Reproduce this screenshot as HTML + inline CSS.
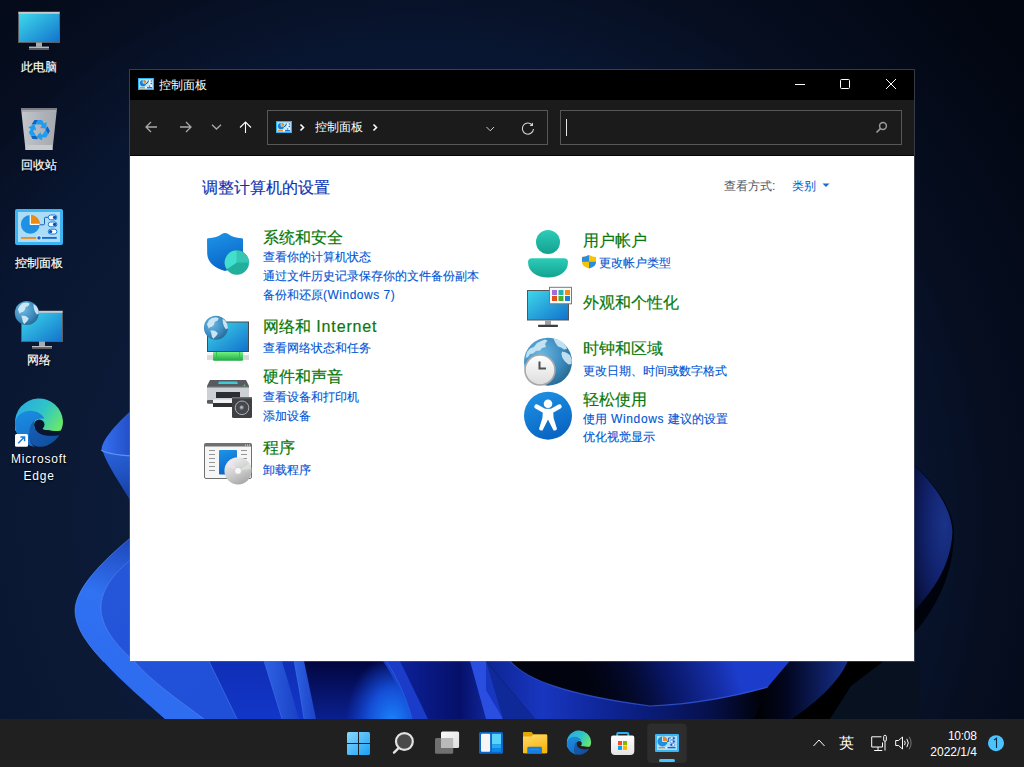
<!DOCTYPE html>
<html><head><meta charset="utf-8">
<style>
*{box-sizing:border-box;margin:0;padding:0}
html,body{width:1024px;height:767px;overflow:hidden;background:#08132a;font-family:"Liberation Sans",sans-serif}
.a{position:absolute}
svg.a{overflow:visible}
.dt{position:absolute;color:#fff;-webkit-text-stroke:0.2px #fff;font-size:12px;line-height:17px;text-align:center;white-space:nowrap;text-shadow:0 1px 2px rgba(0,0,0,.9),0 0 1px rgba(0,0,0,.8)}
.t{position:absolute;font-size:12px;line-height:16px;white-space:nowrap}
.h{position:absolute;font-size:16px;line-height:20px;white-space:nowrap}
.g{color:#087808;-webkit-text-stroke:0.18px #087808}
.l{color:#0055d4;-webkit-text-stroke:0.12px #0055d4}
</style></head><body>
<!--WALL-->
<svg class="a" style="left:0;top:0" width="1024" height="767" viewBox="0 0 1024 767">
  <defs>
    <radialGradient id="bgl" cx="420" cy="520" r="760" gradientUnits="userSpaceOnUse">
      <stop offset="0" stop-color="#0e1f40"/><stop offset="0.5" stop-color="#0b1935"/><stop offset="0.62" stop-color="#091631"/><stop offset="0.76" stop-color="#060e20"/><stop offset="1" stop-color="#020611"/>
    </radialGradient>
    <linearGradient id="pet1" x1="0" y1="0" x2="1" y2="0">
      <stop offset="0" stop-color="#3470f2"/><stop offset="1" stop-color="#1f44b8"/>
    </linearGradient>
    <linearGradient id="pet1b" x1="0" y1="0" x2="0.2" y2="1">
      <stop offset="0" stop-color="#2c66e0"/><stop offset="0.6" stop-color="#1d4cb8"/><stop offset="1" stop-color="#12358c"/>
    </linearGradient>
    <linearGradient id="pet2" x1="132" y1="532" x2="92" y2="650" gradientUnits="userSpaceOnUse">
      <stop offset="0" stop-color="#1c42b4"/><stop offset="0.55" stop-color="#3072f2"/><stop offset="1" stop-color="#2e6cf0"/>
    </linearGradient>
    <linearGradient id="pet2in" x1="100" y1="560" x2="200" y2="700" gradientUnits="userSpaceOnUse">
      <stop offset="0" stop-color="#2656d8"/><stop offset="1" stop-color="#2050d8"/>
    </linearGradient>
    <linearGradient id="btm" x1="0" y1="0" x2="0" y2="1">
      <stop offset="0" stop-color="#0a1c8c"/><stop offset="1" stop-color="#1236c8"/>
    </linearGradient>
    <radialGradient id="glow1" cx="392" cy="724" r="62" gradientUnits="userSpaceOnUse" gradientTransform="translate(392 724) scale(0.75 1.1) translate(-392 -724)">
      <stop offset="0" stop-color="#1c86ff"/><stop offset="0.5" stop-color="#1450d8"/><stop offset="1" stop-color="#1440d0" stop-opacity="0"/>
    </radialGradient>
    <linearGradient id="stk" x1="0" y1="0" x2="1" y2="0">
      <stop offset="0" stop-color="#2e62e4"/><stop offset="1" stop-color="#1a40c4"/>
    </linearGradient>
    <linearGradient id="dark3" x1="0" y1="0" x2="1" y2="0">
      <stop offset="0" stop-color="#0c2098"/><stop offset="0.6" stop-color="#06106a"/><stop offset="1" stop-color="#1430b0"/>
    </linearGradient>
    <linearGradient id="dark2" x1="0" y1="0" x2="0" y2="1">
      <stop offset="0" stop-color="#02053e"/><stop offset="1" stop-color="#0a2090"/>
    </linearGradient>
    <linearGradient id="swoosh" x1="0" y1="0" x2="0" y2="1">
      <stop offset="0" stop-color="#02062a"/><stop offset="0.5" stop-color="#0c1e90"/><stop offset="1" stop-color="#2250e0"/>
    </linearGradient>
    <linearGradient id="r1" x1="0" y1="0" x2="0" y2="1">
      <stop offset="0" stop-color="#0a1a78"/><stop offset="0.6" stop-color="#1a3ccc"/><stop offset="1" stop-color="#0c1e88"/>
    </linearGradient>
    <linearGradient id="below" x1="486" y1="0" x2="768" y2="0" gradientUnits="userSpaceOnUse">
      <stop offset="0" stop-color="#0e2490"/><stop offset="0.2" stop-color="#1836c0"/><stop offset="0.5" stop-color="#0c2088"/><stop offset="0.8" stop-color="#06104a"/><stop offset="1" stop-color="#000"/>
    </linearGradient>
    <linearGradient id="swR" x1="580" y1="700" x2="730" y2="650" gradientUnits="userSpaceOnUse">
      <stop offset="0" stop-color="#01030e" stop-opacity="0"/><stop offset="0.55" stop-color="#0a1a78" stop-opacity="0.8"/><stop offset="1" stop-color="#1c3ccc"/>
    </linearGradient>
    <linearGradient id="rightb" x1="0" y1="0" x2="1" y2="0">
      <stop offset="0" stop-color="#000"/><stop offset="0.35" stop-color="#020620"/><stop offset="1" stop-color="#16308e"/>
    </linearGradient>
    <radialGradient id="sph" cx="0.85" cy="0.42" r="0.8">
      <stop offset="0" stop-color="#1a3388"/><stop offset="0.4" stop-color="#122470"/><stop offset="0.75" stop-color="#0a1548"/><stop offset="1" stop-color="#03061a"/>
    </radialGradient>
  </defs>
  <rect width="1024" height="767" fill="url(#bgl)"/>
  <!-- right sphere petal -->
  <path d="M900 452 C928 476 952 502 954 532 C954 578 932 618 900 648 Z" fill="#01030c"/>
  <path d="M900 452 C927 476 951 502 952.5 532 C951 566 932 596 900 624 Z" fill="url(#sph)"/>
  <!-- left upper petal -->
  <path d="M140 403 C126 414 107 433 102.5 445 C100.5 450 102 453 108 455 L140 457 Z" fill="url(#pet1)"/>
  <path d="M102 448 C105 462 118 480 140 516 L140 455 C120 455 106 455 102 448 Z" fill="url(#pet1b)"/>
  <path d="M101 450 Q112 456 140 456" stroke="#6aa0f4" stroke-width="1.2" fill="none" opacity="0.8"/>
  <!-- bottom bloom base -->
  <path d="M140 530 L140 661 L884 661 L830 719 L165 719 C146 702 122 682 104 662 C88 645 75 628 75 610 C76 585 108 556 140 530 Z" fill="url(#btm)"/>
  <!-- lower petal bright band -->
  <path d="M140 553 C118 568 103 585 101 605 C100 622 110 640 134 661 C150 680 178 700 204 719 L237 719 L209 661 L140 661 Z" fill="url(#pet2in)"/>
  <path d="M140 530 C108 556 76 585 75 610 C75 628 88 645 104 662 C122 682 146 702 165 719 L204 719 C178 700 150 680 134 661 C110 640 100 622 101 605 C103 585 118 568 140 553 Z" fill="url(#pet2)"/>
  <path d="M140 553 C118 568 103 585 101 605 C100 622 110 640 134 661 C150 680 178 700 204 719" stroke="#6a9cf6" stroke-width="0.9" fill="none" opacity="0.55"/>
  <path d="M140 530 C108 556 76 585 75 610 C75 628 88 645 104 662" stroke="#5a9af8" stroke-width="1" fill="none" opacity="0.5"/>
  <path d="M209 661 L237 719" stroke="#4a7ae8" stroke-width="1" fill="none" opacity="0.6"/>
  <!-- streaks -->
  <path d="M264 661 L282 661 L299 719 L282 719 Z" fill="url(#stk)"/>
  <path d="M264 661 L282 719" stroke="#4a7af0" stroke-width="0.8" fill="none" opacity="0.6"/>
  <path d="M294 661 L306 661 L318 719 L304 719 Z" fill="url(#stk)"/>
  <path d="M294 661 Q300 690 304 719" stroke="#4a7af0" stroke-width="0.8" fill="none" opacity="0.5"/>
  <!-- dark area -->
  <path d="M304 661 L400 661 L430 719 L316 719 Z" fill="url(#dark2)"/>
  <path d="M383 661 L400 661 C412 680 420 700 428 719 L409 719 C404 700 396 680 383 661 Z" fill="#1a3cc8"/>
  <path d="M330 661 L386 661 C399 680 407 700 412 719 L330 719 Z" fill="url(#glow1)"/>
  <path d="M386 661 C399 680 407 700 412 719" stroke="#3a70f0" stroke-width="0.8" fill="none" opacity="0.6"/>
  <path d="M400 661 L472 661 L500 719 L428 719 Z" fill="url(#dark3)"/>
  <path d="M470 661 L486 661 L503 719 L486 719 Z" fill="#2a4ee0"/>
  <!-- right dark swirl region -->
  <path d="M486 661 L884 661 L830 719 L503 719 Z" fill="#02061c"/>
  <path d="M486 661 L535 719 L503 719 L486 690 Z" fill="#1432b8" opacity="0.8"/>
  <path d="M486 661 L510 661 C525 678 560 694 650 706 C692 704.6 737 696 768 687 L754 719 L535 719 Z" fill="url(#below)"/>
  <path d="M510 661 C525 678 560 694 650 706 C692 704.6 737 696 768 687 L790 661 Z" fill="#01030e"/>
  <path d="M510 661 C525 678 560 694 650 706 C692 704.6 737 696 768 687 L790 661 Z" fill="url(#swR)"/>
    <path d="M510 661 C525 678 560 694 650 706 C692 704.6 737 696 768 687" stroke="#3a64f4" stroke-width="1.1" fill="none" opacity="0.7"/>
  <path d="M768 687 L790 661 L848 661 C840 680 820 700 792 719 L754 719 Z" fill="url(#rightb)"/>
  <path d="M848 661 L884 661 L851 686 L830 719 L792 719 C820 700 840 680 848 661 Z" fill="#000"/>
  <path d="M884 661 L920 661 L920 719 L830 719 L851 686 Z" fill="#07111f"/>
</svg>

<!--/WALL-->

<!--DESKTOP-->
<svg class="a" style="left:0;top:0" width="130" height="719" viewBox="0 0 130 719">
<defs>
  <linearGradient id="dscr" x1="0" y1="0" x2="1" y2="1">
    <stop offset="0" stop-color="#3fdcec"/><stop offset="1" stop-color="#1272cc"/>
  </linearGradient>
  <linearGradient id="binG" x1="0" y1="0" x2="1" y2="0">
    <stop offset="0" stop-color="#c4c8cc"/><stop offset="0.5" stop-color="#b2b6bc"/><stop offset="1" stop-color="#a4a8ae"/>
  </linearGradient>
  <radialGradient id="dglobe" cx="0.35" cy="0.35" r="0.75">
    <stop offset="0" stop-color="#6fbbe4"/><stop offset="0.6" stop-color="#3f8dc0"/><stop offset="1" stop-color="#25638c"/>
  </radialGradient>
  <linearGradient id="edgeTop" x1="0" y1="0" x2="1" y2="0.6">
    <stop offset="0" stop-color="#2aa6e6"/><stop offset="0.55" stop-color="#2ec4c8"/><stop offset="1" stop-color="#6ae86a"/>
  </linearGradient>
  <linearGradient id="edgeL" x1="0" y1="0" x2="0.3" y2="1">
    <stop offset="0" stop-color="#1a8ee2"/><stop offset="1" stop-color="#1670cc"/>
  </linearGradient>
  <linearGradient id="edgeB" x1="0" y1="0" x2="1" y2="1">
    <stop offset="0" stop-color="#1760b8"/><stop offset="1" stop-color="#0f4c9a"/>
  </linearGradient>
</defs>
<!-- This PC -->
<rect x="18.5" y="12" width="41" height="30.5" fill="url(#dscr)" stroke="#5c5f64" stroke-width="1"/>
<rect x="18.5" y="12" width="41" height="1.8" fill="#c8cacc"/>
<rect x="36" y="42.5" width="6" height="4.5" fill="#a8acb0"/>
<rect x="29" y="46.7" width="20" height="3.3" fill="#5a5d62"/>
<rect x="29" y="46.7" width="20" height="1.2" fill="#c0c3c6"/>
<!-- Recycle bin -->
<path d="M21 108 H57 L52.5 150 H25.5 Z" fill="url(#binG)"/>
<path d="M21 108 H57 L56.5 112 H21.5 Z" fill="#7a7e84"/>
<path d="M22 111 H56" stroke="#d8dadc" stroke-width="1"/>
<path d="M25.9 145 H52.1 L52.5 150 H25.5 Z" fill="#c8cbce"/>
<g transform="translate(39,130)"><g><path d="M-7.5 -5.5 L-4.5 -10 L-1 -10 L-3.5 -5.5 Z" fill="#0a64c4"/><path d="M-1 -10 L3 -10 L5 -6.5 L7.5 -8 L7.5 -1 L1 -2.5 L3 -4 L1.8 -5.5 L-3.5 -5.5 Z" fill="#1f9cf0"/></g><g transform="rotate(120)"><g><path d="M-7.5 -5.5 L-4.5 -10 L-1 -10 L-3.5 -5.5 Z" fill="#0a64c4"/><path d="M-1 -10 L3 -10 L5 -6.5 L7.5 -8 L7.5 -1 L1 -2.5 L3 -4 L1.8 -5.5 L-3.5 -5.5 Z" fill="#1f9cf0"/></g></g><g transform="rotate(240)"><g><path d="M-7.5 -5.5 L-4.5 -10 L-1 -10 L-3.5 -5.5 Z" fill="#0a64c4"/><path d="M-1 -10 L3 -10 L5 -6.5 L7.5 -8 L7.5 -1 L1 -2.5 L3 -4 L1.8 -5.5 L-3.5 -5.5 Z" fill="#1f9cf0"/></g></g></g>
<!-- Control panel -->
<rect x="15" y="209" width="48" height="36" rx="2" fill="#3db4f2"/>
<rect x="18" y="212" width="42" height="30" fill="#acdcf6"/>
<circle cx="30.3" cy="224.4" r="9.4" fill="#1f90e2"/>
<path d="M30.3 224.4 V215 A9.4 9.4 0 0 1 39.7 224.4 Z" fill="#f08a0e"/>
<path d="M30.3 224.4 V215 M30.3 224.4 H39.7" stroke="#fff" stroke-width="1.2"/>
<path d="M39.7 224.8 H43.5 Q44.5 224.8 44.5 223.8 V218.3 Q44.5 217.3 45.5 217.3 H49" stroke="#0d4ea8" stroke-width="0.9" fill="none"/>
<rect x="48.3" y="215" width="8.6" height="4.8" rx="2.4" fill="#fff" stroke="#1a78d8" stroke-width="1"/>
<circle cx="54.6" cy="217.4" r="1.7" fill="#0d4ea8"/>
<rect x="48.3" y="222" width="8.6" height="4.8" rx="2.4" fill="#fff" stroke="#1a78d8" stroke-width="1"/>
<circle cx="54.6" cy="224.4" r="1.7" fill="#0d4ea8"/>
<rect x="48.3" y="229.2" width="8.6" height="4.8" rx="2.4" fill="#fff" stroke="#1a78d8" stroke-width="1"/>
<circle cx="50.6" cy="231.6" r="1.7" fill="#0d4ea8"/>
<rect x="21" y="237" width="15.6" height="1.8" fill="#f08a0e"/>
<rect x="42" y="237" width="14.7" height="1.8" fill="#0f6ad0"/>
<circle cx="39" cy="237.9" r="2.2" fill="#0f6ad0" stroke="#fff" stroke-width="0.8"/>
<!-- Network -->
<rect x="21.5" y="311" width="41" height="30.5" fill="url(#dscr)" stroke="#5c5f64" stroke-width="1"/>
<rect x="21.5" y="311" width="41" height="1.8" fill="#c8cacc"/>
<rect x="39" y="341.5" width="6" height="4.5" fill="#a8acb0"/>
<rect x="32" y="346" width="20" height="3" fill="#5a5d62"/>
<rect x="32" y="346" width="20" height="1.1" fill="#c0c3c6"/>
<g transform="translate(26.8,312.9)"><circle r="12" fill="url(#dglobe)"/>
<path d="M-9 -3.5 L-7 -7.5 L-4 -9.8 L0 -10.5 L3 -9.5 L1.5 -7 L-1 -6 L-2 -3 L-4 -1 L-6 -0.5 L-7 1 Z M-5.5 2.5 L-1 3 L2 5.5 L0.5 8 L-2.5 11 L-4 9 L-4.5 6 Z M6.5 -9 L9.5 -7 L11.5 -3.5 L12 0.5 L10 1.5 L8 -1.5 L7 -5 Z" fill="#d6ecf7" opacity="0.92"/></g>
<!-- Edge -->
<g id="edgeIcon">
<path d="M15 424 A24 24 0 0 1 63 421 C63 425 62.2 428 60.8 430.5 C57 431.5 51 431 46 430.2 C42 429.4 40 427.5 39 425 L22 440 L15 430 Z" fill="url(#edgeTop)"/>
<path d="M15 424 C15.5 416 22.5 410.5 30.5 410.8 C37 411 42 414 44.5 418.8 C41 418 37 418.5 35 420.5 C31 424 29.5 430 29.5 436 C29.5 440 31 445 35 447 C24 445 15 436 15 424 Z" fill="url(#edgeL)"/>
<path d="M35 420 C31 423 29.2 428 29.2 433 C29.2 439 30.5 443 33 445 C36 446.6 39 447 42 446.8 C49 446 55.5 441 59.3 435 C55 435.8 51 436 46.6 435.6 C41.5 435 38 433 36.2 430.5 C33.8 427.5 33.5 423 35 420 Z" fill="url(#edgeB)"/>
<circle cx="39.3" cy="424.6" r="5.2" fill="#0a1530"/>
<path d="M34.5 426 C35.5 431 40 434.3 46.5 435.2 C51 435.8 55.5 435.6 59.3 435 C55.5 431.5 50.5 430 45.5 430 C42 430 39.5 429 38.5 427 Z" fill="#0a1530"/>
<path d="M43.5 420.5 C45.5 422.5 45.5 425.5 44 427.5 C45.5 429.3 49 430 52 430 C55 430 58 429 60 427.5 C61.5 424 62.8 420 63 418 C63 424 62 428 60 430.5 C56 430.6 50 430.5 45.5 430 C43 429.6 41.5 428 41.5 426 Z" fill="url(#edgeTop)" opacity="0"/>
</g>
<rect x="15" y="434" width="13" height="12.7" rx="1.5" fill="#fff"/>
<path d="M18.2 443.2 L24.4 437 M20.4 437 H24.6 V441.2" stroke="#1a78d8" stroke-width="1.4" fill="none"/>
</svg>

<div class="dt" style="left:0;top:59px;width:78px">此电脑</div>
<div class="dt" style="left:0;top:157px;width:78px">回收站</div>
<div class="dt" style="left:0;top:255px;width:78px">控制面板</div>
<div class="dt" style="left:0;top:352px;width:78px">网络</div>
<div class="dt" style="left:0;top:451px;width:78px;letter-spacing:0.8px;-webkit-text-stroke:0">Microsoft<br>Edge</div>
<!--/DESKTOP-->

<!--WINDOW-->
<div class="a" style="left:129px;top:69px;width:786px;height:593px;background:rgba(120,124,132,0.42)"></div>
<div class="a" style="left:130px;top:70px;width:784px;height:30px;background:#000"></div>
<div class="a" style="left:130px;top:100px;width:784px;height:55px;background:#1b1b1b"></div>
<div class="a" style="left:130px;top:155px;width:784px;height:1px;background:#050505"></div>
<div class="a" style="left:130px;top:156px;width:784px;height:505px;background:#fff"></div>

<!--WICONS-->
<svg class="a" style="left:0;top:0" width="1024" height="767" viewBox="0 0 1024 767">
<defs>
  <symbol id="cps" viewBox="0 0 16 12">
    <rect x="0" y="0" width="16" height="12" fill="#32b0f4"/>
    <rect x="1.2" y="1.2" width="13.6" height="9.6" fill="#bfe8fc"/>
    <circle cx="5" cy="5.2" r="3.1" fill="#1880d8"/>
    <path d="M5 5.2 V2.1 A3.1 3.1 0 0 1 8.1 5.2 Z" fill="#f28a0c"/>
    <path d="M5 5.2 V2.1 M5 5.2 H8.1" stroke="#fff" stroke-width="0.6"/>
    <path d="M8.1 5.4 H9 C9.8 5.4 9.6 3 10.6 3 H11" stroke="#0a3e98" stroke-width="1" fill="none"/>
    <rect x="10.8" y="2.1" width="3.4" height="1.8" rx="0.9" fill="#fff"/><circle cx="13.3" cy="3" r="0.8" fill="#1a64c8"/>
    <rect x="10.8" y="4.6" width="3.4" height="1.8" rx="0.9" fill="#fff"/><circle cx="13.3" cy="5.5" r="0.8" fill="#1a64c8"/>
    <rect x="10.8" y="7.1" width="3.4" height="1.8" rx="0.9" fill="#fff"/><circle cx="11.7" cy="8" r="0.8" fill="#1a64c8"/>
    <rect x="2" y="9.1" width="5" height="1.2" fill="#f28a0c"/>
    <rect x="7" y="9.1" width="2" height="1.2" fill="#fff"/>
    <rect x="9" y="9.1" width="5" height="1.2" fill="#1a64c8"/>
  </symbol>
  <linearGradient id="scr" x1="0" y1="0" x2="1" y2="1">
    <stop offset="0" stop-color="#3fd8ea"/><stop offset="1" stop-color="#1170cc"/>
  </linearGradient>
  <linearGradient id="shG" x1="0" y1="0" x2="0.3" y2="1">
    <stop offset="0" stop-color="#1e95ea"/><stop offset="1" stop-color="#0a66c8"/>
  </linearGradient>
  <radialGradient id="globeG" cx="0.35" cy="0.35" r="0.75">
    <stop offset="0" stop-color="#6bb8e2"/><stop offset="0.6" stop-color="#3d8cc0"/><stop offset="1" stop-color="#25658e"/>
  </radialGradient>
  <linearGradient id="grnG" x1="0" y1="0" x2="0" y2="1">
    <stop offset="0" stop-color="#70f27e"/><stop offset="1" stop-color="#1ea844"/>
  </linearGradient>
  <linearGradient id="tealG" x1="0" y1="0" x2="0" y2="1">
    <stop offset="0" stop-color="#2ccdb8"/><stop offset="1" stop-color="#14a190"/>
  </linearGradient>
  <linearGradient id="accG" x1="0" y1="0" x2="0.4" y2="1">
    <stop offset="0" stop-color="#1f95e6"/><stop offset="1" stop-color="#0a66c4"/>
  </linearGradient>
  <linearGradient id="cdG" x1="0.2" y1="0" x2="0.7" y2="1">
    <stop offset="0" stop-color="#f2f2f2"/><stop offset="0.5" stop-color="#d2d2d2"/><stop offset="1" stop-color="#a6a6a6"/>
  </linearGradient>
  <linearGradient id="faceG" x1="0" y1="0" x2="0" y2="1">
    <stop offset="0" stop-color="#ffffff"/><stop offset="1" stop-color="#dcdcdc"/>
  </linearGradient>
  <radialGradient id="spkG" cx="0.4" cy="0.4" r="0.6">
    <stop offset="0" stop-color="#c8d0d8"/><stop offset="1" stop-color="#404448"/>
  </radialGradient>
</defs>

<!-- title bar -->
<use href="#cps" x="138" y="78" width="16" height="12"/>
<path d="M795 84.5 H805" stroke="#fff" stroke-width="1"/>
<rect x="840.5" y="79.5" width="9" height="9" rx="1" fill="none" stroke="#fff" stroke-width="1"/>
<path d="M886 79 L896 89 M896 79 L886 89" stroke="#fff" stroke-width="1"/>

<!-- nav -->
<path d="M157 127 H146 M151 122 L146 127 L151 132" stroke="#a9a9a9" stroke-width="1.3" fill="none"/>
<path d="M180 127 H191 M186 122 L191 127 L186 132" stroke="#a9a9a9" stroke-width="1.3" fill="none"/>
<path d="M212 124.8 L216.5 129 L221 124.8" stroke="#a9a9a9" stroke-width="1.3" fill="none"/>
<path d="M245.5 133 V122 M240 127.5 L245.5 122 L251 127.5" stroke="#fff" stroke-width="1.1" fill="none"/>
<use href="#cps" x="276" y="121" width="16" height="12"/>
<path d="M300.5 124.5 L303.5 127.5 L300.5 130.5" stroke="#fff" stroke-width="1.6" fill="none"/>
<path d="M373.5 124.5 L376.5 127.5 L373.5 130.5" stroke="#fff" stroke-width="1.6" fill="none"/>
<path d="M486.5 127 L490.3 130.8 L494 127" stroke="#cfcfcf" stroke-width="1" fill="none"/>
<path d="M532.6 125.5 A5.6 5.6 0 1 0 533.5 129" stroke="#d4d4d4" stroke-width="1.1" fill="none"/>
<path d="M533 122.5 V126 H529.5 Z" fill="#d4d4d4"/>
<path d="M566.5 119 V136" stroke="#e6e6e6" stroke-width="1"/>
<circle cx="883" cy="126" r="3.4" stroke="#9a9a9a" stroke-width="1.5" fill="none"/>
<path d="M880.6 128.4 L876.5 132.5" stroke="#9a9a9a" stroke-width="1.7"/>

<!-- content: system security -->
<path d="M207 239.5 Q207 238.2 208.3 238.2 C214 238.2 218.5 236.3 221.8 234 C223.8 232.6 226.2 232.6 228.2 234 C231.5 236.3 236 238.2 241.7 238.2 Q243 238.2 243 239.5 V253 C243 262 236 268 225 271 C214 268 207.2 262 207.2 253 Z" fill="url(#shG)"/>
<circle cx="236.8" cy="262.6" r="12" fill="#22b09e" stroke="#1f9c8a" stroke-width="0.5"/>
<path d="M236.8 262.6 L236.8 250.6 A12 12 0 0 0 226.8 269.3 Z" fill="#43dfce"/>
<path d="M236.8 262.6 L236.8 250.6 A12 12 0 0 1 248.8 262.4 Z" fill="#36c7b3"/>

<!-- network -->
<rect x="207.5" y="322" width="41" height="29.5" fill="url(#scr)" stroke="#4a4a4a" stroke-width="1"/>
<rect x="207" y="353.2" width="42" height="6.7" fill="#d8d8d8"/>
<rect x="207" y="353.2" width="42" height="2" fill="#f6f6f6"/>
<rect x="213" y="352" width="30" height="8.8" rx="1" fill="url(#grnG)"/>
<path d="M216.5 352 V360.8 M239.5 352 V360.8" stroke="#2cbf50" stroke-width="0.8"/>
<g transform="translate(215.9,327.8)"><circle r="12" fill="url(#globeG)"/>
<path d="M-9 -3.5 L-7 -7.5 L-4 -9.8 L0 -10.5 L3 -9.5 L1.5 -7 L-1 -6 L-2 -3 L-4 -1 L-6 -0.5 L-7 1 Z M-5.5 2.5 L-1 3 L2 5.5 L0.5 8 L-2.5 11 L-4 9 L-4.5 6 Z M6.5 -9 L9.5 -7 L11.5 -3.5 L12 0.5 L10 1.5 L8 -1.5 L7 -5 Z" fill="#d6ecf7" opacity="0.92"/></g>

<!-- hardware -->
<path d="M210 380 H246 L249 386 H207 Z" fill="#575a5e"/>
<path d="M219 381.5 H237 L238 384 H218 Z" fill="#3ccad8"/>
<rect x="207" y="386" width="42" height="15" fill="#cdd0d4"/>
<rect x="207" y="386" width="42" height="1.5" fill="#6a6d70"/>
<rect x="207" y="400" width="42" height="3.7" rx="1" fill="#5a5d60"/>
<rect x="216" y="392" width="24" height="6" fill="#2b2d30"/>
<rect x="213" y="399.5" width="22" height="3.5" fill="#f2f2f2"/>
<rect x="213" y="403" width="22" height="4" fill="#303236"/>
<circle cx="244.5" cy="385.3" r="0.9" fill="#3fe060"/>
<rect x="232" y="397" width="20" height="21" rx="1.5" fill="#3e4044"/>
<rect x="232" y="397" width="20" height="1.5" fill="#6a6c70"/>
<circle cx="242" cy="407.8" r="6.8" fill="#45484c" stroke="#b8bcc0" stroke-width="0.9"/>
<circle cx="242" cy="407.8" r="2.6" fill="url(#spkG)"/>

<!-- programs -->
<rect x="204.5" y="443.5" width="47" height="35" rx="1.5" fill="#f6f6f6" stroke="#707070" stroke-width="1"/>
<rect x="204.5" y="443.5" width="47" height="3" fill="#707070"/>
<circle cx="245.5" cy="445" r="0.6" fill="#fff"/><circle cx="247.5" cy="445" r="0.6" fill="#fff"/><circle cx="249.5" cy="445" r="0.6" fill="#fff"/>
<path d="M209 450.5 H215 M209 454.5 H215 M209 458.5 H215 M209 462.5 H215 M209 466.5 H215 M209 470.5 H215 M241 450.5 H247 M241 454.5 H247 M241 458.5 H247" stroke="#8a8a8a" stroke-width="0.9"/>
<rect x="219" y="450" width="18" height="24.5" rx="1" fill="url(#shG)"/>
<circle cx="238" cy="470.8" r="13.6" fill="url(#cdG)"/>
<path d="M238 470.8 L225.5 466 A13.6 13.6 0 0 1 231 459 Z" fill="#f4e4f4" opacity="0.55"/><path d="M238 470.8 L249.5 463.5 A13.6 13.6 0 0 1 251.4 469 Z" fill="#e4f4e4" opacity="0.5"/>
<circle cx="238" cy="470.8" r="3.5" fill="#f8f8f8" stroke="#c8c8c8" stroke-width="0.8"/>

<!-- user accounts -->
<circle cx="548" cy="241.9" r="12" fill="url(#tealG)"/>
<path d="M532 258.2 H564 Q568 258.2 568 262 C568 272 559 277.5 548 277.5 C537 277.5 528 272 528 262 Q528 258.2 532 258.2 Z" fill="url(#tealG)"/>
<path d="M589 255 Q592.5 257 596 257 V262 Q596 266.5 589 268.5 Q582 266.5 582 262 V257 Q585.5 257 589 255 Z" fill="#f6c400"/>
<path d="M589 255 Q585.5 257 582 257 V261.8 H589 Z M589 261.8 H596 V262 Q596 266.5 589 268.5 Z" fill="#2a8ce0"/>

<!-- appearance -->
<rect x="527.5" y="290.5" width="41" height="29.5" fill="url(#scr)" stroke="#555" stroke-width="1"/>
<rect x="545" y="320" width="6" height="5" fill="#9ea2a6"/>
<rect x="538" y="324.8" width="20" height="2.3" rx="0.8" fill="#3c3e42"/>
<rect x="549.5" y="287.3" width="22" height="16.5" fill="#fafafa" stroke="#7a7a7a" stroke-width="1"/>
<rect x="552" y="290" width="5" height="5" fill="#a070d8"/><rect x="558.5" y="290" width="5" height="5" fill="#22b4a6"/><rect x="565" y="290" width="5" height="5" fill="#f28c12"/>
<rect x="552" y="296" width="5" height="5" fill="#e4501a"/><rect x="558.5" y="296" width="5" height="5" fill="#48b02a"/><rect x="565" y="296" width="5" height="5" fill="#1a7ee0"/>

<!-- clock region -->
<circle cx="548" cy="361.7" r="24" fill="url(#globeG)"/>
<path d="M525.5 358 L527 352 L530 348.5 L534 347 L537 343 L541 341 L545 339.5 L547.5 340.5 L545 344 L546 347 L542 348 L540 350.5 L536 351 L533 353.5 L530 354 L528 357 Z M553.5 338.8 L558 339.5 L562 341.5 L566 346 L567 349 L564 349.5 L561 347.5 L558 346.5 L555.5 343 Z M562 351.5 L566 352.5 L570 355 L571.8 360 L571.5 364 L568.5 364.5 L565 361.5 L562.5 358 L561.5 354.5 Z" fill="#cfe9f5" opacity="0.9"/>
<circle cx="540" cy="370" r="15" fill="url(#faceG)" stroke="#a8a8a8" stroke-width="1.6"/>
<path d="M539.5 361.5 V368.5 H546" stroke="#505050" stroke-width="2" fill="none"/>

<!-- ease of access -->
<circle cx="548" cy="415.7" r="24" fill="url(#accG)"/>
<circle cx="548" cy="403.8" r="4.3" fill="#fff"/>
<path d="M536.5 406.5 L544.5 411 H551.5 L559.5 406.5" stroke="#fff" stroke-width="4.4" stroke-linecap="round" stroke-linejoin="round" fill="none"/>
<path d="M543 410 L553 410 L553.6 418 L557 429 Q556 431 553.5 430.5 L548 419.5 L542.5 430.5 Q540 431 539 429 L542.4 418 Z" fill="#fff"/>
<!-- view by arrow -->
<path d="M822.5 183.5 H829.5 L826 187 Z" fill="#1a6ad0"/>
</svg>

<!--/WICONS-->
<div class="t" style="left:159px;top:77px;color:#fff">控制面板</div>
<div class="a" style="left:267px;top:110px;width:281px;height:35px;border:1px solid #575757"></div>
<div class="a" style="left:560px;top:110px;width:342px;height:35px;border:1px solid #575757"></div>
<div class="t" style="left:315px;top:119px;color:#fff">控制面板</div>

<div class="h" style="left:202px;top:178px;color:#0d30b0;-webkit-text-stroke:0.15px #0d30b0">调整计算机的设置</div>
<div class="t" style="left:724px;top:178px;color:#4d5566">查看方式:</div>
<div class="t" style="left:792px;top:178px;color:#0058cc">类别</div>

<div class="h g" style="left:263px;top:228px">系统和安全</div>
<div class="t l" style="left:263px;top:249px">查看你的计算机状态</div>
<div class="t l" style="left:263px;top:268px">通过文件历史记录保存你的文件备份副本</div>
<div class="t l" style="left:263px;top:287px">备份和还原<span style="letter-spacing:0.5px">(Windows 7)</span></div>
<div class="h g" style="left:263px;top:317px">网络和<span style="letter-spacing:0.85px"> Internet</span></div>
<div class="t l" style="left:263px;top:340px">查看网络状态和任务</div>
<div class="h g" style="left:263px;top:367px">硬件和声音</div>
<div class="t l" style="left:263px;top:389px">查看设备和打印机</div>
<div class="t l" style="left:263px;top:408px">添加设备</div>
<div class="h g" style="left:263px;top:438px">程序</div>
<div class="t l" style="left:263px;top:462px">卸载程序</div>

<div class="h g" style="left:583px;top:231px">用户帐户</div>
<div class="t l" style="left:599px;top:255px">更改帐户类型</div>
<div class="h g" style="left:583px;top:293px">外观和个性化</div>
<div class="h g" style="left:583px;top:339px">时钟和区域</div>
<div class="t l" style="left:583px;top:363px">更改日期、时间或数字格式</div>
<div class="h g" style="left:583px;top:390px">轻松使用</div>
<div class="t l" style="left:583px;top:411px">使用<span style="letter-spacing:0.65px"> Windows </span>建议的设置</div>
<div class="t l" style="left:583px;top:429px">优化视觉显示</div>
<!--/WINDOW-->

<!--TASKBAR-->
<div class="a" style="left:0;top:719px;width:1024px;height:48px;background:#202020"></div>
<svg class="a" style="left:0;top:719px" width="1024" height="48" viewBox="0 719 1024 48">
<defs>
  <linearGradient id="stG" x1="347" y1="732" x2="370" y2="755" gradientUnits="userSpaceOnUse">
    <stop offset="0" stop-color="#8ad9fb"/><stop offset="1" stop-color="#18a0f6"/>
  </linearGradient>
  <linearGradient id="tvG" x1="0" y1="0" x2="1" y2="1">
    <stop offset="0" stop-color="#fbfbfb"/><stop offset="1" stop-color="#dedede"/>
  </linearGradient>
  <linearGradient id="fdG" x1="0" y1="0" x2="0.4" y2="1">
    <stop offset="0" stop-color="#ffdc70"/><stop offset="1" stop-color="#f7b60c"/>
  </linearGradient>
  <linearGradient id="bagG" x1="0" y1="0" x2="0" y2="1">
    <stop offset="0" stop-color="#ffffff"/><stop offset="1" stop-color="#e4e4e4"/>
  </linearGradient>
  <linearGradient id="tedgeTop" x1="0" y1="0" x2="1" y2="0.6">
    <stop offset="0" stop-color="#2aa6e6"/><stop offset="0.55" stop-color="#2ec4c8"/><stop offset="1" stop-color="#6ae86a"/>
  </linearGradient>
  <linearGradient id="tedgeL" x1="0" y1="0" x2="0.3" y2="1">
    <stop offset="0" stop-color="#1a8ee2"/><stop offset="1" stop-color="#1670cc"/>
  </linearGradient>
  <linearGradient id="tedgeB" x1="0" y1="0" x2="1" y2="1">
    <stop offset="0" stop-color="#1760b8"/><stop offset="1" stop-color="#0f4c9a"/>
  </linearGradient>
  <symbol id="cpm" viewBox="0 0 24 18">
    <rect x="0" y="0" width="24" height="18" rx="1" fill="#3ab4f4"/>
    <rect x="2" y="2" width="20" height="14" fill="#aedef8"/>
    <circle cx="7.5" cy="7.5" r="5" fill="#1f8ee0"/>
    <path d="M7.5 7.5 V2.5 A5 5 0 0 1 12.5 7.5 Z" fill="#f08a0e"/>
    <path d="M7.5 7.5 V2.5 M7.5 7.5 H12.5" stroke="#fff" stroke-width="0.7"/>
    <path d="M12 7.5 H13.5 V4 H15.5" stroke="#0d4ea8" stroke-width="0.8" fill="none"/>
    <rect x="15.3" y="3" width="4.5" height="2.4" rx="1.2" fill="#fff" stroke="#1a78d8" stroke-width="0.6"/><circle cx="18.6" cy="4.2" r="1" fill="#0d4ea8"/>
    <rect x="15.3" y="6.3" width="4.5" height="2.4" rx="1.2" fill="#fff" stroke="#1a78d8" stroke-width="0.6"/><circle cx="18.6" cy="7.5" r="1" fill="#0d4ea8"/>
    <rect x="15.3" y="9.6" width="4.5" height="2.4" rx="1.2" fill="#fff" stroke="#1a78d8" stroke-width="0.6"/><circle cx="16.5" cy="10.8" r="1" fill="#0d4ea8"/>
    <rect x="3.5" y="13" width="7" height="1.3" fill="#f08a0e"/>
    <rect x="10.5" y="13" width="2" height="1.3" fill="#fff"/>
    <rect x="12.5" y="13" width="8" height="1.3" fill="#0f6ad0"/>
  </symbol>
</defs>
<!-- start -->
<path d="M347 733.5 Q347 732 348.5 732 H358 V743 H347 Z" fill="url(#stG)"/>
<path d="M359 732 H368.5 Q370 732 370 733.5 V743 H359 Z" fill="url(#stG)"/>
<path d="M347 744 H358 V755 H348.5 Q347 755 347 753.5 Z" fill="url(#stG)"/>
<path d="M359 744 H370 V753.5 Q370 755 368.5 755 H359 Z" fill="url(#stG)"/>
<rect x="347" y="732" width="23" height="23" fill="url(#stG)" opacity="0"/>
<!-- search -->
<circle cx="404.4" cy="741.5" r="8.4" fill="#4a4a4a" stroke="#e2e2e2" stroke-width="2.2"/>
<path d="M398.8 747.8 L394 752.6" stroke="#e2e2e2" stroke-width="2.4" stroke-linecap="round"/>
<!-- task view -->
<rect x="435" y="738" width="18.2" height="15.7" rx="1.5" fill="#707070"/>
<rect x="441" y="731.6" width="18.1" height="16.4" rx="1.5" fill="url(#tvG)"/>
<rect x="441" y="738" width="12.2" height="10" fill="#b9b9b9"/>
<!-- widgets -->
<rect x="479" y="732" width="24" height="21.7" rx="1.5" fill="#0f66c6"/>
<rect x="481" y="733.8" width="9.1" height="18" rx="1" fill="#f6f6f6"/>
<rect x="492" y="733.8" width="9" height="10.6" fill="#5ad3fb"/>
<rect x="492" y="744.4" width="9" height="3.9" fill="#22aaf6"/>
<rect x="492" y="748.3" width="9" height="3.5" fill="#0b8ae8"/>
<!-- explorer -->
<path d="M523 733 Q523 732 524 732 H531.5 L533.5 734.6 H546.2 Q547.2 734.6 547.2 735.6 V752.3 Q547.2 753.3 546.2 753.3 H524 Q523 753.3 523 752.3 Z" fill="#e3a800"/>
<path d="M523 736.5 H531.5 L533.5 734.6 H546.2 Q547.2 734.6 547.2 735.6 V752.3 Q547.2 753.3 546.2 753.3 H524 Q523 753.3 523 752.3 Z" fill="url(#fdG)"/>
<path d="M527.3 753.3 V748 Q527.3 746.7 528.6 746.7 H540.7 Q542 746.7 542 748 V753.3 Z" fill="#1a7ede"/>
<rect x="530" y="749" width="9" height="1" fill="#3a9af0" opacity="0.6"/>
<!-- edge -->
<g transform="translate(579,742.8) scale(0.5042) translate(-39,-423)">
<path d="M15 424 A24 24 0 0 1 63 421 C63 425 62.2 428 60.8 430.5 C57 431.5 51 431 46 430.2 C42 429.4 40 427.5 39 425 L22 440 L15 430 Z" fill="url(#tedgeTop)"/>
<path d="M15 424 C15.5 416 22.5 410.5 30.5 410.8 C37 411 42 414 44.5 418.8 C41 418 37 418.5 35 420.5 C31 424 29.5 430 29.5 436 C29.5 440 31 445 35 447 C24 445 15 436 15 424 Z" fill="url(#tedgeL)"/>
<path d="M35 420 C31 423 29.2 428 29.2 433 C29.2 439 30.5 443 33 445 C36 446.6 39 447 42 446.8 C49 446 55.5 441 59.3 435 C55 435.8 51 436 46.6 435.6 C41.5 435 38 433 36.2 430.5 C33.8 427.5 33.5 423 35 420 Z" fill="url(#tedgeB)"/>
<circle cx="39.3" cy="424.6" r="5.2" fill="#202020"/>
<path d="M34.5 426 C35.5 431 40 434.3 46.5 435.2 C51 435.8 55.5 435.6 59.3 435 C55.5 431.5 50.5 430 45.5 430 C42 430 39.5 429 38.5 427 Z" fill="#202020"/>
<path d="M43.5 420.5 C45.5 422.5 45.5 425.5 44 427.5 C45.5 429.3 49 430 52 430 C55 430 58 429 60 427.5 C61.5 424 62.8 420 63 418 C63 424 62 428 60 430.5 C56 430.6 50 430.5 45.5 430 C43 429.6 41.5 428 41.5 426 Z" fill="url(#tedgeTop)" opacity="0"/>
</g>
<!-- store -->
<path d="M617.2 737 V734 Q617.2 733 618.2 733 H627.3 Q628.3 733 628.3 734 V737" stroke="#2ab2f2" stroke-width="2" fill="none"/>
<path d="M611 737.5 Q611 735.5 613 735.5 H632.3 Q634.3 735.5 634.3 737.5 V751 Q634.3 755 630.3 755 H615 Q611 755 611 751 Z" fill="url(#bagG)"/>
<rect x="618" y="741" width="4" height="4.2" fill="#f05022"/>
<rect x="623" y="741" width="4" height="4.2" fill="#7fba00"/>
<rect x="618" y="745.9" width="4" height="4" fill="#00a4ef"/>
<rect x="623" y="745.9" width="4" height="4" fill="#ffb900"/>
<!-- control panel active -->
<rect x="647.3" y="723.4" width="39.5" height="39.5" rx="4" fill="#2d2d2d"/>
<use href="#cpm" x="655" y="734" width="24" height="18"/>
<rect x="659" y="759" width="16" height="3" rx="1.5" fill="#4cc2ff"/>
<!-- tray -->
<path d="M813.5 746 L819 740 L824.5 746" stroke="#fff" stroke-width="1" fill="none"/>
<path d="M881.5 736.8 H871.7 V747 H882.5 V742.5" stroke="#fff" stroke-width="1" fill="none"/>
<path d="M874.2 750.5 H882.3 M878 747 V750.5" stroke="#fff" stroke-width="1"/>
<rect x="883.7" y="735.3" width="2.6" height="6" rx="1.2" stroke="#fff" stroke-width="1" fill="none"/>
<path d="M885 741.3 V750.5" stroke="#fff" stroke-width="1"/>
<path d="M895.7 740.5 H898.5 L902.5 737 V749 L898.5 745.5 H895.7 Z" stroke="#fff" stroke-width="1" fill="none" stroke-linejoin="round"/>
<path d="M904.5 740.8 Q906 743 904.5 745.2 M906.8 738.8 Q909.8 743 906.8 747.2" stroke="#fff" stroke-width="1" fill="none"/>
<path d="M909.2 736.8 Q913 743 909.2 749.2" stroke="#777" stroke-width="1" fill="none"/>
<circle cx="996" cy="743.2" r="8" fill="#4cc2ff"/>
<path d="M994 740 L996.5 738.2 V748" stroke="#0b2a40" stroke-width="1.1" fill="none"/>
</svg>

<div class="t" style="left:948px;top:728px;color:#fff;width:28px;text-align:right;letter-spacing:-0.3px">10:08</div>
<div class="t" style="left:929px;top:744px;color:#fff;width:48px;text-align:right">2022/1/4</div>
<div class="t" style="left:839px;top:734px;color:#fff;font-size:15px;line-height:18px">英</div>
<!--/TASKBAR-->
</body></html>
